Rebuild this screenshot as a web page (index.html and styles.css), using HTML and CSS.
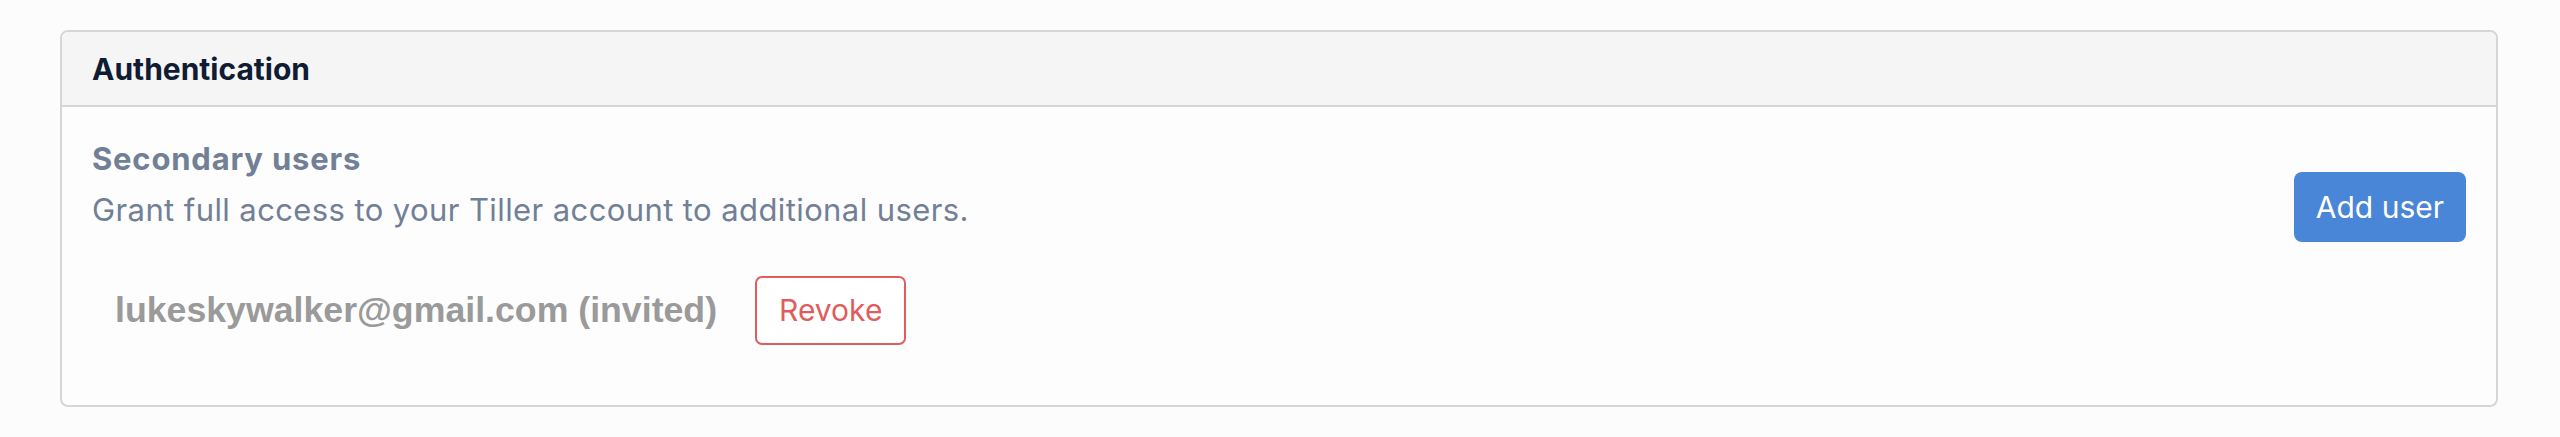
FILE: index.html
```
<html>
<head>
    <meta charset="UTF-8">
    <meta name="viewport" content="width=device-width, initial-scale=1.0">
    <title>Authentication</title>
    <link rel="stylesheet" href="styles.css">
</head>
<body>
    <section class="panel">
        <div class="panel-header">Authentication</div>
        <div class="panel-body">
            <div class="panel-row">
                <div class="panel-text">
                    <div class="panel-title">Secondary users</div>
                    <div class="panel-desc">Grant full access to your Tiller account to additional users.</div>
                </div>
                <button class="btn-add">Add user</button>
            </div>
            <div class="user-row">
                <span class="user-email">lukeskywalker@gmail.com (invited)</span>
                <button class="btn-revoke">Revoke</button>
            </div>
        </div>
    </section>
</body>
</html>
```

FILE: styles.css
```
body {
    font-family: Inter, "Noto Sans", sans-serif;
    margin: 0;
    padding: 30px 62px 0 60px;
    background-color: #fcfcfc;
}

.panel {
    border: 2px solid #d6d6d6;
    border-radius: 8px;
    background-color: #fdfdfd;
    overflow: hidden;
}

.panel-header {
    height: 73px;
    display: flex;
    align-items: center;
    padding: 0 30px;
    background-color: #f5f5f5;
    border-bottom: 2px solid #d6d6d6;
    color: #0f1c33;
    font-size: 30px;
    font-weight: 700;
}

.panel-body {
    padding: 26px 30px 60px 30px;
}

.panel-row {
    display: flex;
    justify-content: space-between;
    align-items: flex-start;
}

.panel-title {
    font-size: 31px;
    line-height: 51px;
    font-weight: 700;
    letter-spacing: 0.8px;
    color: #718096;
}

.panel-desc {
    font-size: 31px;
    line-height: 51px;
    letter-spacing: 0.4px;
    color: #718096;
}

.btn-add {
    margin-top: 39px;
    padding: 17px 22px;
    border: none;
    border-radius: 8px;
    background-color: #4a86d8;
    color: #fff;
    font-family: Inter, "Noto Sans", sans-serif;
    font-size: 30px;
    line-height: 36px;
}

.user-row {
    display: flex;
    align-items: center;
    gap: 38px;
    margin-top: 34px;
    padding-left: 23px;
}

.user-email {
    font-family: "Liberation Sans", Arial, sans-serif;
    font-size: 35.7px;
    font-weight: 700;
    color: #9a9a9a;
}

.btn-revoke {
    padding: 15px 22px;
    border: 2px solid #e05d5d;
    border-radius: 7px;
    background-color: #fff;
    color: #e05d5d;
    font-family: Inter, "Noto Sans", sans-serif;
    font-size: 30px;
    line-height: 35px;
}
```
